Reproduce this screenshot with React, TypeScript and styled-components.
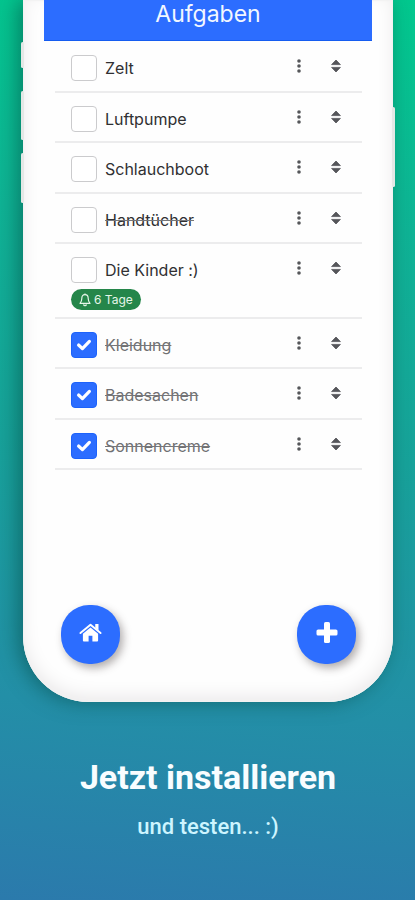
import React, { useState } from "react";
import styled, { createGlobalStyle } from "styled-components";

const Global = createGlobalStyle`
  *, *::before, *::after { box-sizing: border-box; }
  html, body, #root { margin: 0; min-height: 100%; }
  body { overflow-x: hidden; font-family: Inter, "Liberation Sans", sans-serif; }
`;

const Page = styled.main`
  display: flex;
  flex-direction: column;
  min-height: 100vh;
  padding: 0 22px 0 23px;
  overflow: hidden;
  background: linear-gradient(184deg, #02c88e 0%, #0fb395 25%, #17a29a 50%, #238fa7 78%, #2b7aac 100%);
`;

const Phone = styled.section`
  position: relative;
  display: flex;
  flex-direction: column;
  min-height: 702px;
  padding: 0 21px 38px;
  border-radius: 0 0 66px 66px;
  background: #fefefe;
  box-shadow:
    inset 0 0 1px 1px #f2f2f2,
    inset 0 -6px 20px -3px #e6e4e5,
    -5px 0 20px rgba(0, 64, 58, 0.5);
`;

const SideButton = styled.span<{ $side: "left" | "right"; $top: number; $height: number }>`
  position: absolute;
  top: ${(p) => p.$top}px;
  ${(p) => p.$side}: -2px;
  width: 3px;
  height: ${(p) => p.$height}px;
  border-radius: 2px;
  background: #e4e8e6;
`;

const Header = styled.header`
  display: flex;
  justify-content: center;
  height: 41px;
  background: #2c6dff;
  border-bottom: 1px solid #155cf0;
`;

const Title = styled.h1`
  margin: 0;
  font-size: 23px;
  line-height: 28px;
  font-weight: 400;
  color: #f2f7ff;
`;

const List = styled.ul`
  display: flex;
  flex-direction: column;
  min-height: 429px;
  margin: 0 10px 0 11px;
  padding: 1px 0 0;
  list-style: none;
`;

const Row = styled.li<{ $tall: boolean }>`
  display: flex;
  flex: 1 0 auto;
  align-items: flex-start;
  padding: 13px 16px ${(p) => (p.$tall ? 6 : 9)}px;
  border-bottom: 2px solid #ececed;
`;

const Body = styled.div`
  display: flex;
  flex: 1;
  flex-direction: column;
  align-items: flex-start;
  gap: 6px;
`;

const TaskLabel = styled.label`
  display: flex;
  align-items: center;
  gap: 8px;
  height: 26px;
`;

const Check = styled.input`
  appearance: none;
  width: 26px;
  height: 26px;
  margin: 0;
  border: 1px solid #cbcbcd;
  border-radius: 4px;
  background: #fff;
  &:checked {
    border-color: #1d63fb;
    background: #2c6dff;
  }
`;

const CheckWrap = styled.span`
  display: grid;
  & > * { grid-area: 1 / 1; place-self: center; }
  & > svg { pointer-events: none; }
`;

const TaskText = styled.span<{ $struck: boolean; $muted: boolean }>`
  font-size: 16px;
  line-height: 24px;
  color: ${(p) => (p.$muted ? "#707072" : "#303032")};
  text-decoration: ${(p) => (p.$struck ? "line-through" : "none")};
  text-decoration-thickness: 1px;
  text-decoration-color: #77777a;
`;

const Badge = styled.span`
  display: flex;
  align-items: center;
  gap: 3px;
  height: 21px;
  padding: 0 8px;
  border-radius: 11px;
  background: #25864a;
  color: #e6f6e9;
  font-size: 12px;
  line-height: 20px;
`;

const IconButton = styled.button`
  display: grid;
  place-items: center;
  width: 20px;
  height: 22px;
  padding: 0;
  border: 0;
  background: none;
  color: #55565a;
  cursor: pointer;
`;

const Actions = styled.div`
  display: flex;
  gap: 17px;
`;

const Dock = styled.nav`
  display: flex;
  justify-content: space-between;
  margin-top: auto;
  padding: 0 16px 0 17px;
`;

const RoundButton = styled.button`
  display: grid;
  place-items: center;
  width: 59px;
  height: 59px;
  padding: 0 0 4px;
  border: 0;
  border-radius: 28px;
  background: #2c6dff;
  color: #fff;
  box-shadow: 3px 4px 8px rgba(60, 50, 50, 0.4);
  cursor: pointer;
`;

const Promo = styled.footer`
  padding-top: 54px;
  font-family: Roboto, "Liberation Sans", sans-serif;
  text-align: center;
`;

const PromoTitle = styled.h2`
  margin: 0;
  font-size: 34px;
  line-height: 42px;
  font-weight: 700;
  color: #f8fdff;
`;

const PromoText = styled.p`
  margin: 16px 0 0;
  font-size: 22px;
  line-height: 26px;
  font-weight: 500;
  color: #cdf5ff;
`;

const CheckMark = () => (
  <svg width="16" height="14" viewBox="0 0 16 14" aria-hidden="true">
    <path d="M2.6 7 L6.4 10.6 L13.4 3.4" fill="none" stroke="#fff" strokeWidth="3.2" strokeLinecap="round" strokeLinejoin="round" />
  </svg>
);

const Dots = () => (
  <svg width="6" height="14" viewBox="0 0 6 14" fill="currentColor" aria-hidden="true">
    <circle cx="3" cy="2" r="1.8" />
    <circle cx="3" cy="7" r="1.8" />
    <circle cx="3" cy="12" r="1.8" />
  </svg>
);

const Sort = () => (
  <svg width="10" height="14" viewBox="0 0 10 14" fill="currentColor" stroke="currentColor" strokeWidth="0.8" strokeLinejoin="round" aria-hidden="true">
    <path d="M5 1 L9.4 5.6 H0.6 Z" />
    <path d="M5 13 L9.4 8.4 H0.6 Z" />
  </svg>
);

const Bell = () => (
  <svg width="12" height="14" viewBox="0 0 12 14" fill="none" stroke="currentColor" strokeWidth="1.2" strokeLinejoin="round" aria-hidden="true">
    <path d="M6 1.6 C3.6 1.6 2.8 3.4 2.8 5.4 C2.8 8 2.2 9 1 10.4 H11 C9.8 9 9.2 8 9.2 5.4 C9.2 3.4 8.4 1.6 6 1.6 Z" />
    <path d="M6 0.4 V1.6 M4.6 11.4 C4.8 13.2 7.2 13.2 7.4 11.4" />
  </svg>
);

const House = () => (
  <svg width="23" height="19" viewBox="0 0 24 20" fill="currentColor" aria-hidden="true">
    <path d="M4 11.4 L12 4.8 L20 11.4 V18.4 Q20 19.4 19 19.4 H14 V13.4 H10 V19.4 H5 Q4 19.4 4 18.4 Z" />
    <path d="M1.4 10.6 L12 1.8 L22.6 10.6" fill="none" stroke="currentColor" strokeWidth="2" strokeLinecap="round" strokeLinejoin="round" />
    <path d="M17 1 H20.4 V8 L17 5.2 Z" />
  </svg>
);

const Plus = () => (
  <svg width="22" height="22" viewBox="0 0 22 22" fill="currentColor" aria-hidden="true">
    <rect x="8" y="0" width="6" height="21" rx="1.6" />
    <rect x="0.5" y="7.5" width="21" height="6" rx="1.6" />
  </svg>
);

type Task = { name: string; done?: boolean; struck?: boolean; due?: string };

const initialTasks: Task[] = [
  { name: "Zelt" },
  { name: "Luftpumpe" },
  { name: "Schlauchboot" },
  { name: "Handtücher", struck: true },
  { name: "Die Kinder :)", due: "6 Tage" },
  { name: "Kleidung", done: true, struck: true },
  { name: "Badesachen", done: true, struck: true },
  { name: "Sonnencreme", done: true, struck: true },
];

export default function App() {
  const [tasks, setTasks] = useState(initialTasks);
  const toggle = (index: number) =>
    setTasks((list) => list.map((t, i) => (i === index ? { ...t, done: !t.done, struck: !t.done } : t)));

  return (
    <>
      <Global />
      <Page>
        <Phone>
          <SideButton $side="left" $top={42} $height={26} />
          <SideButton $side="left" $top={91} $height={49} />
          <SideButton $side="left" $top={153} $height={50} />
          <SideButton $side="right" $top={107} $height={80} />
          <Header>
            <Title>Aufgaben</Title>
          </Header>
          <List>
            {tasks.map((task, i) => (
              <Row key={task.name} $tall={!!task.due}>
                <Body>
                  <TaskLabel>
                    <CheckWrap>
                      <Check type="checkbox" checked={!!task.done} onChange={() => toggle(i)} />
                      {task.done && <CheckMark />}
                    </CheckWrap>
                    <TaskText $struck={!!task.struck} $muted={!!task.done}>{task.name}</TaskText>
                  </TaskLabel>
                  {task.due && (
                    <Badge>
                      <Bell />
                      {task.due}
                    </Badge>
                  )}
                </Body>
                <Actions>
                  <IconButton type="button" aria-label={`Menü ${task.name}`}><Dots /></IconButton>
                  <IconButton type="button" aria-label={`${task.name} verschieben`}><Sort /></IconButton>
                </Actions>
              </Row>
            ))}
          </List>
          <Dock>
            <RoundButton type="button" aria-label="Startseite"><House /></RoundButton>
            <RoundButton type="button" aria-label="Hinzufügen"><Plus /></RoundButton>
          </Dock>
        </Phone>
        <Promo>
          <PromoTitle>Jetzt installieren</PromoTitle>
          <PromoText>und testen... :)</PromoText>
        </Promo>
      </Page>
    </>
  );
}
